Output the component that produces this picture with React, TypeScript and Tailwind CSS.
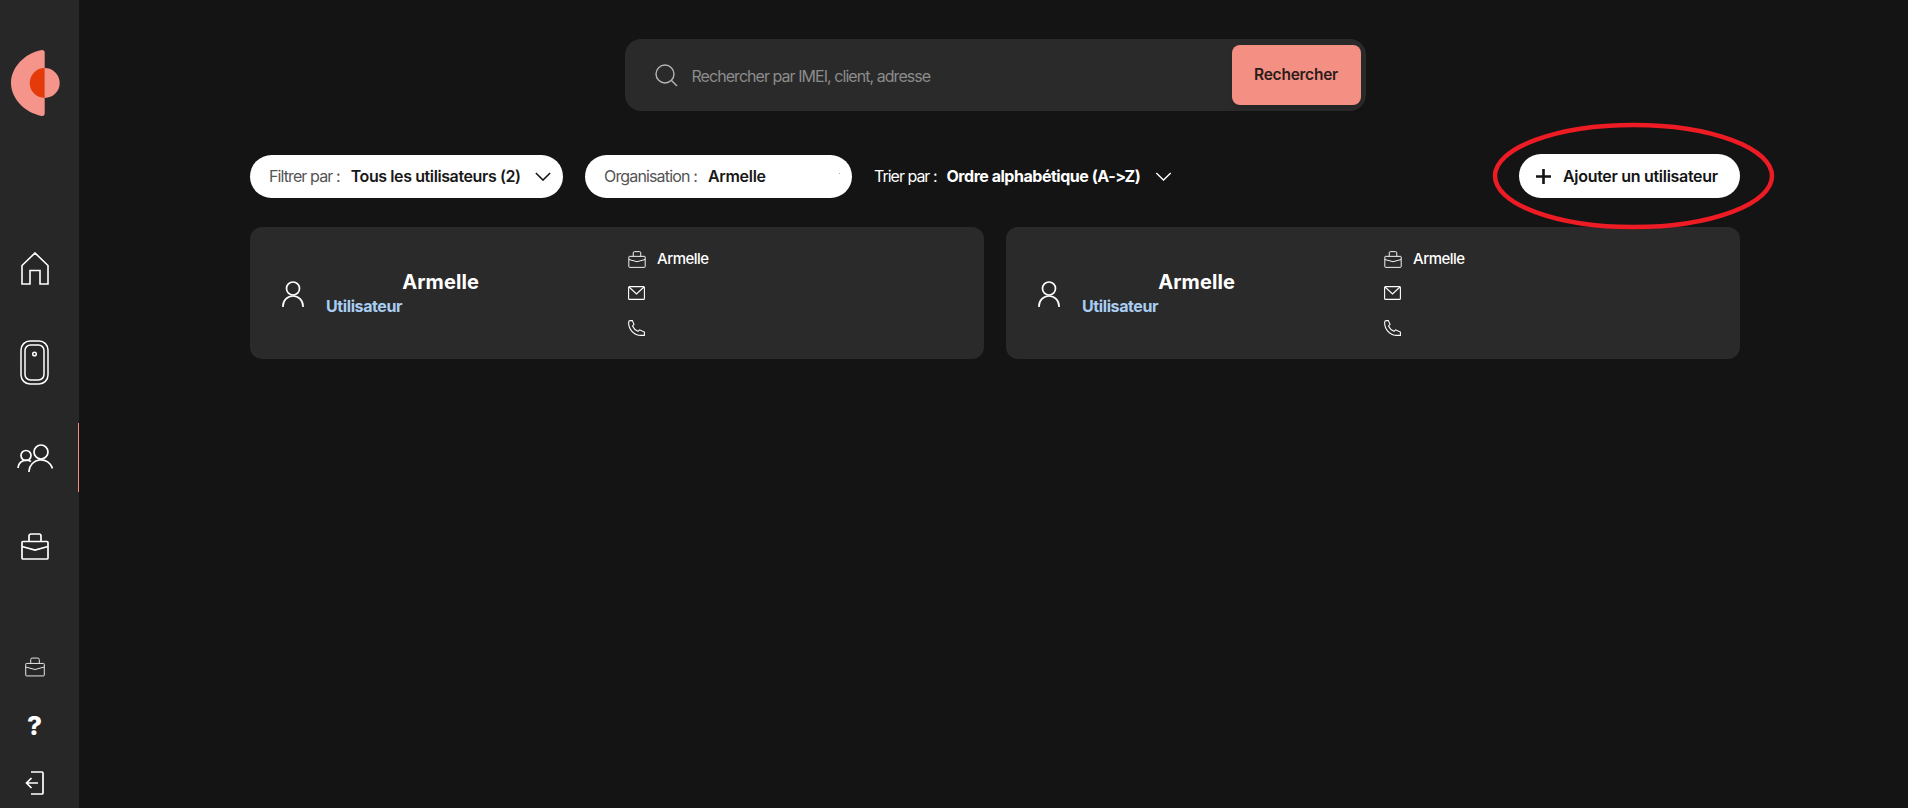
import React from "react";

const Ic = ({ w, h, vb, sw = 2, children }: { w: number; h: number; vb: string; sw?: number; children: React.ReactNode }) => (
  <svg width={w} height={h} viewBox={vb} fill="none" stroke="currentColor" strokeWidth={sw} className="block shrink-0">
    {children}
  </svg>
);

const Briefcase = ({ w, h, sw = 1.6 }: { w: number; h: number; sw?: number }) => (
  <Ic w={w} h={h} vb="0 0 28 27" sw={sw}>
    <path d="M1 9.5a1 1 0 0 1 1-1h24a1 1 0 0 1 1 1V25a1 1 0 0 1-1 1H2a1 1 0 0 1-1-1Z" />
    <path d="M8 8.5V3a2 2 0 0 1 2-2h8a2 2 0 0 1 2 2v5.500" />
    <path d="M1 13.500 14 17 27 13.500" />
  </Ic>
);

const Person = () => (
  <Ic w={22} h={26} vb="0 0 22 26" sw={1.7}>
    <circle cx="11" cy="7.500" r="6.500" />
    <path d="M1 26v-1a10 10 0 0 1 20 0v1" />
  </Ic>
);

const Mail = () => (
  <Ic w={17} h={14} vb="0 0 17 14" sw={1.1}>
    <rect x="0.600" y="0.600" width="15.800" height="12.800" rx="1" />
    <path d="M1 1 8.500 8 16 1" />
  </Ic>
);

const Phone = () => (
  <Ic w={17} h={16} vb="0 0 17 16" sw={1.1}>
    <path d="M2.500.6h1.800L6 4.300 4.500 6c1 2.300 2.800 4.300 5.500 5.300l1.600-1.500 4.800 2.200v3.400H13C6 15.400.6 9.500.6 2.500.6 1.500 1.500.6 2.500.6Z" />
  </Ic>
);

const Chevron = ({ w, sw }: { w: number; sw: number }) => (
  <Ic w={w} h={Math.round(w / 1.8)} vb="0 0 18 10" sw={sw}>
    <path d="M1 1 9 9 17 1" />
  </Ic>
);

const Card = () => (
  <div className="flex h-[132px] flex-1 rounded-xl bg-[#2a2a2a] text-white">
    <div className="flex w-[378px] items-center pl-8">
      <div className="mt-[2px]">
        <Person />
      </div>
      <div className="ml-[22px] flex w-[153px] flex-col">
        <span className="-mt-px self-end text-[20px] leading-6 font-bold tracking-[0.1px]">Armelle</span>
        <span className="mt-[2px] text-[16px] leading-[20px] font-bold tracking-[-0.4px] text-[#a9cdf2]">Utilisateur</span>
      </div>
    </div>
    <div className="flex flex-col pt-[20px]">
      <div className="flex h-6 items-center gap-[11px]">
        <Briefcase w={18} h={17} sw={1.5} />
        <span className="text-[15px] font-medium tracking-[-0.5px]">Armelle</span>
      </div>
      <div className="mt-[10px] flex h-6 items-center">
        <Mail />
      </div>
      <div className="mt-[11px] flex h-6 items-center">
        <Phone />
      </div>
    </div>
  </div>
);

const NavRow = ({ children, active, cls }: { children: React.ReactNode; active?: boolean; cls?: string }) => (
  <div className={`flex items-center justify-center border-r pr-[9px] ${active ? "border-[#f48b7f]" : "border-transparent"} ${cls ?? ""}`}>
    {children}
  </div>
);

export default function App() {
  return (
    <div className="flex h-[808px] w-full overflow-hidden bg-[#141414] font-[Inter,sans-serif] text-white">
      <aside className="flex h-full w-[79px] shrink-0 flex-col bg-[#272727]">
        <div className="flex h-[234px] pt-[50px] pl-[11px]">
          <svg width="50" height="66" viewBox="0 0 50 66" className="block">
            <path d="M33.700 2.500V63.500a2.500 2.500 0 0 1-3 2.400C13 62.500 0 48 0 33S13 3.500 30.700.1a2.500 2.500 0 0 1 3 2.400Z" fill="#f4948a" />
            <path d="M33.700 18a15 15 0 0 0 0 30Z" fill="#e53a0a" />
            <path d="M33.700 18a15 15 0 0 1 0 30Z" fill="#f4948a" />
          </svg>
        </div>
        <NavRow cls="h-[69px]">
          <Ic w={28} h={33} vb="0 0 28 33" sw={1.6}>
            <path d="M1 32V13.500L14 1l13 12.500V32h-8V18.500H9V32Z" />
          </Ic>
        </NavRow>
        <NavRow cls="mt-[25px] h-[69px]">
          <Ic w={29} h={45} vb="0 0 29 45" sw={1.5}>
            <rect x="1" y="1" width="27" height="43" rx="9" />
            <rect x="5" y="5" width="19" height="35" rx="5.500" />
            <circle cx="14.500" cy="14" r="1.800" />
          </Ic>
        </NavRow>
        <NavRow active cls="mt-[26px] h-[69px]">
          <Ic w={36} h={28} vb="0 0 36 28" sw={1.7}>
            <circle cx="24" cy="8" r="7" />
            <path d="M12 28v-1a12 12 0 0 1 23.500-2.500" />
            <circle cx="9" cy="11.500" r="5" />
            <path d="M1 24a8.500 8.500 0 0 1 13-6.500" />
          </Ic>
        </NavRow>
        <NavRow cls="mt-[20px] h-[69px]">
          <Briefcase w={28} h={27} sw={1.7} />
        </NavRow>
        <div className="mt-auto flex flex-col gap-2">
          <NavRow cls="h-[50px] text-[#e6e6e6]">
            <Briefcase w={20} h={20} sw={1.4} />
          </NavRow>
          <NavRow cls="h-[50px]">
            <span className="mt-[2px] text-[26px] leading-none font-extrabold">?</span>
          </NavRow>
          <NavRow cls="h-[50px]">
            <Ic w={19} h={24} vb="0 0 19 24" sw={1.7}>
              <path d="M6 1h11a1 1 0 0 1 1 1v20a1 1 0 0 1-1 1H6" />
              <path d="M13 12H1.500M6.500 7l-5 5 5 5" />
            </Ic>
          </NavRow>
        </div>
      </aside>

      <main className="flex min-w-0 flex-1 flex-col pt-[39px] pr-[168px] pl-[171px]">
        <div className="flex h-[72px] w-[741px] items-center self-center rounded-2xl bg-[#2a2a2a] pr-[5px] pl-[30px]">
          <span className="text-[#b4b4b4]">
            <Ic w={23} h={23} vb="0 0 23 23" sw={1.4}>
              <circle cx="10" cy="10" r="9" />
              <path d="M16.500 16.500 22 22" />
            </Ic>
          </span>
          <span className="ml-[14px] flex-1 pt-px text-[16px] tracking-[-0.95px] text-[#8c8c8c]">Rechercher par IMEI, client, adresse</span>
          <button className="h-[60px] w-[129px] rounded-lg bg-[#f48f83] text-[15.500px] font-semibold tracking-[-0.25px] text-[#2a1c1a] shadow-md">
            Rechercher
          </button>
        </div>

        <div className="mt-[43px] flex h-11 items-center">
          <div className="flex h-[43px] w-[313px] items-center rounded-full bg-white pl-[19px] text-[16px] text-[#181818]">
            <span className="tracking-[-0.9px] text-[#555]">Filtrer par :</span>
            <span className="ml-[11px] font-semibold tracking-[-0.4px]">Tous les utilisateurs (2)</span>
            <span className="ml-[14px]"><Chevron w={16} sw={1.8} /></span>
          </div>
          <div className="ml-[22px] flex h-[43px] w-[267px] items-center rounded-full bg-white pl-[19px] text-[16px] text-[#181818]">
            <span className="tracking-[-0.85px] text-[#555]">Organisation :</span>
            <span className="ml-[11px] font-semibold tracking-[-0.3px]">Armelle</span>
            <span className="mr-[12px] mb-[6px] ml-auto size-px bg-[#aaa]" />
          </div>
          <div className="ml-[22px] flex items-center text-[16px]">
            <span className="tracking-[-1px]">Trier par :</span>
            <span className="ml-[10px] font-bold tracking-[-0.47px]">Ordre alphabétique (A-&gt;Z)</span>
            <span className="ml-[15px]"><Chevron w={17} sw={1.5} /></span>
          </div>
          <div className="relative ml-auto">
            <button className="flex h-11 w-[221px] items-center rounded-full bg-white pl-[17px] text-[16px] font-semibold tracking-[-0.3px] text-[#141414]">
              <span className="text-[#141414]">
                <Ic w={15} h={15} vb="0 0 16 16" sw={2.8}>
                  <path d="M8 0v16M0 8h16" />
                </Ic>
              </span>
              <span className="ml-[12px]">Ajouter un utilisateur</span>
            </button>
            <svg width="284" height="108" viewBox="0 0 284 108" className="pointer-events-none absolute top-[-32px] left-[-27px]">
              <ellipse cx="141.500" cy="54" rx="138.500" ry="51" fill="none" stroke="#ed1c24" strokeWidth="4.500" />
            </svg>
          </div>
        </div>

        <div className="mt-[29px] flex gap-[22px]">
          <Card />
          <Card />
        </div>
      </main>
    </div>
  );
}
